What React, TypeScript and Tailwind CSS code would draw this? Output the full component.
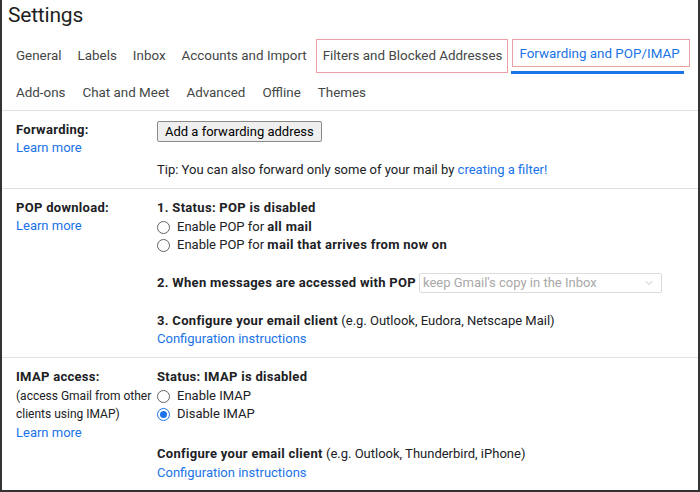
import { ChevronDown } from 'lucide-react';

const font = { fontFamily: 'Roboto, "Liberation Sans", sans-serif' };

function Radio({ checked = false, children }: { checked?: boolean; children: React.ReactNode }) {
  return (
    <div className="flex items-center h-[18px]">
      {checked ? (
        <span className="w-[13px] h-[13px] rounded-full border-[1.5px] border-[#1a73e8] flex items-center justify-center">
          <span className="w-[7px] h-[7px] rounded-full bg-[#1a73e8]" />
        </span>
      ) : (
        <span className="w-[13px] h-[13px] rounded-full border border-[#5f6368]" />
      )}
      <span className="ml-[7px]">{children}</span>
    </div>
  );
}

function Link({ children }: { children: React.ReactNode }) {
  return <span className="text-[#1a73e8]">{children}</span>;
}

function B({ children }: { children: React.ReactNode }) {
  return <b className="font-bold tracking-[0.3px]">{children}</b>;
}

export default function App() {
  const topTabs = ['General', 'Labels', 'Inbox', 'Accounts and Import'];
  const bottomTabs = ['Add-ons', 'Chat and Meet', 'Advanced', 'Offline', 'Themes'];

  return (
    <div style={font} className="w-[700px] h-[492px] bg-white border-x-2 border-b-2 border-[#333] overflow-hidden text-[13px] leading-[18px] text-[#202124] whitespace-nowrap">
      {/* Title */}
      <div className="h-[38px] pl-[6px] pt-[1px] text-[21px] leading-[28px] tracking-[-0.2px] text-[#1f1f1f]">Settings</div>

      {/* Tabs */}
      <div className="pl-[14px] text-[13.4px] text-[#444746]">
        <div className="flex items-start h-[35px]">
          {topTabs.map(t => (
            <span key={t} className="mr-[16px] leading-[35px]">{t}</span>
          ))}
          <span className="-ml-[7px] mt-[1px] h-[34px] pl-[6px] pr-[5px] leading-[32px] border border-[#e8a0a4]">
            Filters and Blocked Addresses
          </span>
          <div className="ml-[4px] mt-[1px] flex flex-col">
            <span className="h-[28px] pl-[6px] pr-[9px] leading-[28px] border border-[#e8a0a4] text-[#1a73e8]">
              Forwarding and POP/IMAP
            </span>
            <span className="mt-[4px] -ml-[1px] mr-[6px] h-[3px] bg-[#1a73e8]" />
          </div>
        </div>
        <div className="flex items-center h-[37px] pt-[2px]">
          {bottomTabs.map(t => (
            <span key={t} className="mr-[17px]">{t}</span>
          ))}
        </div>
      </div>

      {/* Forwarding */}
      <div className="border-t border-[#e0e0e0] flex pl-[14px] pt-[10px] pb-[9px]">
        <div className="w-[141px] shrink-0">
          <div><B>Forwarding:</B></div>
          <div><Link>Learn more</Link></div>
        </div>
        <div className="flex flex-col">
          <button className="self-start h-[21px] px-[7px] text-[13px] leading-[19px] bg-[#efefef] border border-[#8a8a8a] rounded-[2px] text-black">
            Add a forwarding address
          </button>
          <div className="mt-[19px]">
            Tip: You can also forward only some of your mail by <Link>creating a filter!</Link>
          </div>
        </div>
      </div>

      {/* POP download */}
      <div className="border-t border-[#e0e0e0] flex pl-[14px] pt-[10px] pb-[9px]">
        <div className="w-[141px] shrink-0">
          <div><B>POP download:</B></div>
          <div><Link>Learn more</Link></div>
        </div>
        <div className="flex flex-col">
          <div><B>1. Status: POP is disabled</B></div>
          <div className="mt-[1px]">
            <Radio>Enable POP for <B>all mail</B></Radio>
            <Radio>Enable POP for <B>mail that arrives from now on</B></Radio>
          </div>
          <div className="mt-[19px] flex items-center h-[20px]">
            <B>2. When messages are accessed with POP</B>
            <div className="ml-[3px] w-[243px] h-[20px] border border-[#dcdcdc] rounded-[2px] flex items-center justify-between pl-[3px] pr-[6px] text-[#a8a8a8]">
              <span>keep Gmail's copy in the Inbox</span>
              <ChevronDown className="w-[12px] h-[12px] text-[#b0b0b0]" strokeWidth={1.5} />
            </div>
          </div>
          <div className="mt-[19px]">
            <B>3. Configure your email client</B> (e.g. Outlook, Eudora, Netscape Mail)
          </div>
          <div><Link>Configuration instructions</Link></div>
        </div>
      </div>

      {/* IMAP access */}
      <div className="border-t border-[#e0e0e0] flex pl-[14px] pt-[10px]">
        <div className="w-[141px] shrink-0">
          <div><B>IMAP access:</B></div>
          <div className="mt-[1px] text-[12px] leading-[18px]">
            <div>(access Gmail from other</div>
            <div>clients using IMAP)</div>
          </div>
          <div className="mt-[1px]"><Link>Learn more</Link></div>
        </div>
        <div className="flex flex-col">
          <div><B>Status: IMAP is disabled</B></div>
          <div className="mt-[1px]">
            <Radio>Enable IMAP</Radio>
            <Radio checked>Disable IMAP</Radio>
          </div>
          <div className="mt-[22px]">
            <B>Configure your email client</B> (e.g. Outlook, Thunderbird, iPhone)
          </div>
          <div className="mt-[1px]"><Link>Configuration instructions</Link></div>
        </div>
      </div>
    </div>
  );
}
